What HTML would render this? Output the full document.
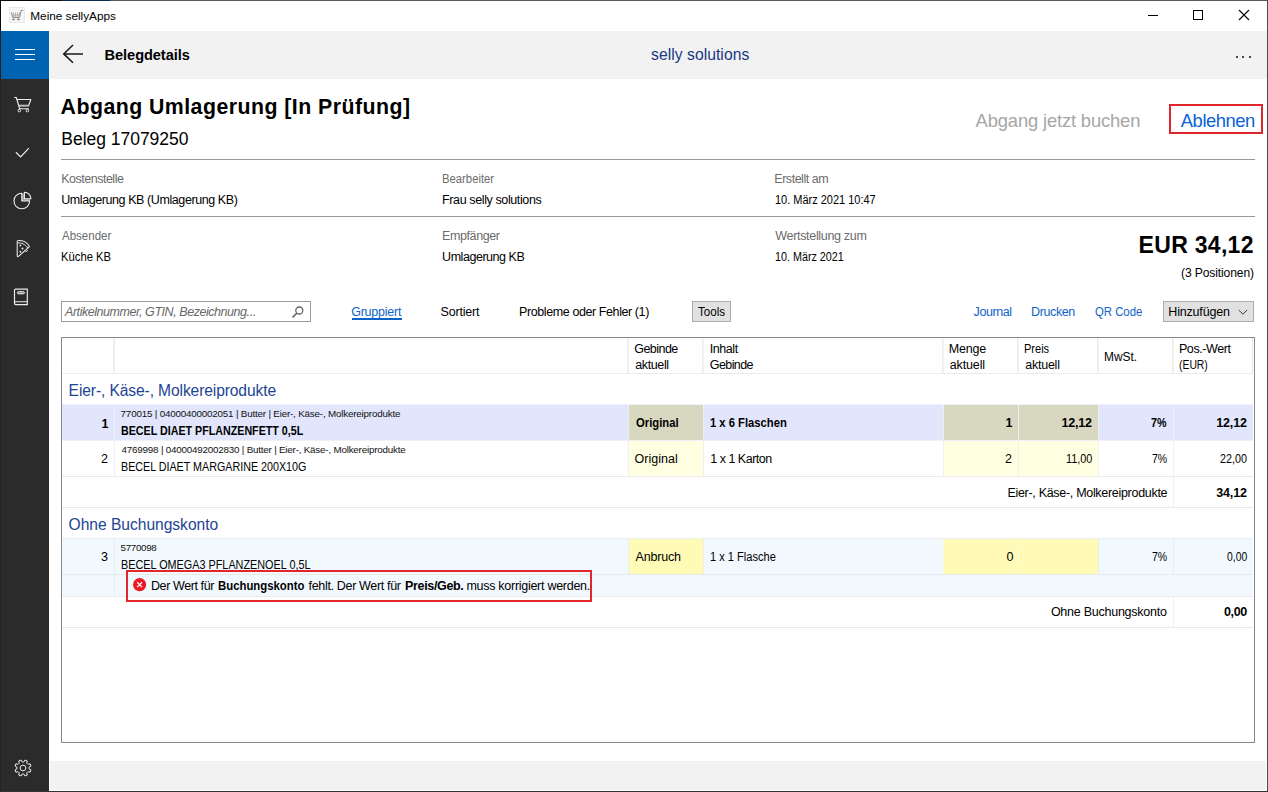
<!DOCTYPE html>
<html lang="de"><head><meta charset="utf-8"><title>Meine sellyApps</title>
<style>
html,body{margin:0;padding:0;width:1268px;height:792px;overflow:hidden;background:#fff;}
body{position:relative;font-family:"Liberation Sans",sans-serif;}
div,svg,span{position:absolute;}
span{line-height:20px;white-space:pre;transform-origin:0 50%;}
</style></head><body>
<div style="left:0px;top:0px;width:1268px;height:792px;background:#ffffff;"></div>
<div style="left:49px;top:31px;width:1218px;height:48px;background:#f2f2f2;"></div>
<div style="left:1px;top:31px;width:48px;height:760px;background:#2b2b2b;"></div>
<div style="left:1px;top:31px;width:48px;height:48px;background:#0063b1;"></div>
<div style="left:50px;top:761px;width:1216px;height:29px;background:#f2f2f2;"></div>
<div style="left:0px;top:0px;width:61px;height:1px;background:#0a0a0a;"></div>
<div style="left:61px;top:0px;width:49px;height:1px;background:#0b2b52;"></div>
<div style="left:110px;top:0px;width:1158px;height:1px;background:#5a5a5a;"></div>
<div style="left:0px;top:1px;width:1px;height:30px;background:#0c0c0c;"></div>
<div style="left:0px;top:31px;width:1px;height:48px;background:#2a1f16;"></div>
<div style="left:0px;top:79px;width:1px;height:713px;background:#232323;"></div>
<div style="left:1267px;top:0px;width:1px;height:792px;background:#4a4a4a;"></div>
<div style="left:0px;top:791px;width:1268px;height:1px;background:#333333;"></div>
<svg style="left:9px;top:7px" width="16" height="16" viewBox="0 0 16 16"><rect x="0.5" y="0.5" width="15" height="15" fill="#f6f6f6" stroke="#e9e9e9"/><path d="M2.3 5.2l1.5 5.4h6.8l1.5-7.2h2.2" fill="none" stroke="#8c8c8c" stroke-width="1"/><path d="M4.3 5.4l.6 4.6M6.4 5.4l.2 4.6M8.5 5.4l-.2 4.6M10.6 5.4l-.6 4.6M3.2 8h7.6" fill="none" stroke="#a8a8a8" stroke-width="0.9"/><path d="M3.2 12.6h2.6M8.2 12.6h2.6" stroke="#8c8c8c" stroke-width="1.2"/><path d="M4.5 10.6v2M9.5 10.6v2" stroke="#9a9a9a" stroke-width="0.9"/></svg>
<div style="left:1148px;top:15px;width:10px;height:1px;background:#000;"></div>
<div style="left:1193px;top:10px;width:10px;height:10px;border:1px solid #000;box-sizing:border-box;"></div>
<svg style="left:1238px;top:9px" width="12" height="12" viewBox="0 0 12 12"><path d="M1 1l10 10M11 1L1 11" stroke="#000" stroke-width="1.1" fill="none"/></svg>
<div style="left:15px;top:49px;width:20px;height:1.4px;background:#ffffff;"></div>
<div style="left:15px;top:54px;width:20px;height:1.4px;background:#ffffff;"></div>
<div style="left:15px;top:59px;width:20px;height:1.4px;background:#ffffff;"></div>
<svg style="left:61px;top:43px" width="24" height="22" viewBox="0 0 24 22"><path d="M22 10.9H3M12 2L2.7 10.9l9.3 8.9" stroke="#1a1a1a" stroke-width="1.55" fill="none"/></svg>
<div style="left:1236px;top:55.5px;width:2px;height:2px;background:#111;border-radius:1px;"></div>
<div style="left:1242px;top:55.5px;width:2px;height:2px;background:#111;border-radius:1px;"></div>
<div style="left:1249px;top:55.5px;width:2px;height:2px;background:#111;border-radius:1px;"></div>
<svg style="left:12px;top:94px" width="22" height="22" viewBox="0 0 22 22"><path d="M2.1 3.5H4.3L7.6 14.7H16.8M5 5.5H18.8L16.6 11.9H7" fill="none" stroke="#ececec" stroke-width="1.15" stroke-linejoin="round"/><path d="M6.9 11.2H16.8" stroke="#bbbbbb" stroke-width="1" fill="none"/><circle cx="7.3" cy="16.6" r="1.3" fill="none" stroke="#ececec" stroke-width="1"/><circle cx="15.4" cy="16.6" r="1.3" fill="none" stroke="#ececec" stroke-width="1"/></svg>
<svg style="left:12px;top:141px" width="22" height="22" viewBox="0 0 22 22"><path d="M3.9 11.3L8.6 15.9L16.9 7.1" fill="none" stroke="#ececec" stroke-width="1.2"/></svg>
<svg style="left:11px;top:188px" width="24" height="24" viewBox="0 0 24 24"><path d="M10.8 5.6H13.4V10.7H19V13H10.8Z" fill="#9c9c9c"/><path d="M10.8 5.2A7.8 7.8 0 1 0 18.6 13H10.8Z" fill="none" stroke="#ececec" stroke-width="1.1"/><path d="M13.4 4.2A6.5 6.5 0 0 1 19.9 10.7H13.4Z" fill="none" stroke="#ececec" stroke-width="1.1"/></svg>
<svg style="left:11px;top:236px" width="24" height="24" viewBox="0 0 24 24"><path d="M6.2 5.4C6.4 3.4 15 4.2 18.4 10.6L7.5 20.4C6.8 21 6.2 20.7 6.2 19.8Z" fill="none" stroke="#ececec" stroke-width="1.05" stroke-linejoin="round"/><path d="M6.4 7C10 6.4 14.4 8.2 16.8 12.2" fill="none" stroke="#ececec" stroke-width="1"/><path d="M14.2 15c.5 1.1 2.1.7 2.3-.8" fill="none" stroke="#ececec" stroke-width="1"/><circle cx="9.4" cy="9.4" r="0.95" fill="#ececec"/><circle cx="11.5" cy="12.5" r="0.95" fill="#ececec"/><circle cx="9.4" cy="15.7" r="0.95" fill="#ececec"/></svg>
<svg style="left:10.2px;top:284.6px" width="24" height="24" viewBox="0 0 24 24"><path d="M5.6 4.1H17.3V19.6H5.8C5 19.6 4.5 19 4.5 18.2V5.2C4.5 4.6 5 4.1 5.6 4.1Z" fill="none" stroke="#ececec" stroke-width="1.15"/><path d="M4.5 18.2C4.5 17.3 5 16.7 5.8 16.7H17.3" fill="none" stroke="#ececec" stroke-width="1.15"/><rect x="7.4" y="6.7" width="7" height="2.1" rx="0.9" fill="#8a8a8a" stroke="#ececec" stroke-width="1"/></svg>
<svg style="left:10.5px;top:756.2px" width="24" height="24" viewBox="0 0 24 24"><path d="M20.01 13.99L19.07 16.26L16.88 15.66L15.66 16.88L16.26 19.07L13.99 20.01L12.86 18.04L11.14 18.04L10.01 20.01L7.74 19.07L8.34 16.88L7.12 15.66L4.93 16.26L3.99 13.99L5.96 12.86L5.96 11.14L3.99 10.01L4.93 7.74L7.12 8.34L8.34 7.12L7.74 4.93L10.01 3.99L11.14 5.96L12.86 5.96L13.99 3.99L16.26 4.93L15.66 7.12L16.88 8.34L19.07 7.74L20.01 10.01L18.04 11.14L18.04 12.86Z" fill="none" stroke="#ededed" stroke-width="1" stroke-linejoin="round"/><circle cx="12" cy="12" r="2.9" fill="none" stroke="#ededed" stroke-width="1"/></svg>
<div style="left:61px;top:159px;width:1194px;height:1px;background:#999999;"></div>
<div style="left:61px;top:216px;width:1194px;height:1px;background:#999999;"></div>
<div style="left:1169px;top:104px;width:94px;height:30px;border:2px solid #e0262d;box-sizing:border-box;"></div>
<div style="left:61px;top:301px;width:250px;height:21px;background:#fff;border:1px solid #999ca2;box-sizing:border-box;"></div>
<svg style="left:290.7px;top:304.6px" width="14" height="14" viewBox="0 0 14 14"><circle cx="8.3" cy="5.5" r="3.5" fill="none" stroke="#666" stroke-width="1.3"/><path d="M5.9 8L1.6 12.4" stroke="#666" stroke-width="1.6" fill="none"/></svg>
<div style="left:351.5px;top:318px;width:50px;height:2px;background:#0e63c9;"></div>
<div style="left:692px;top:301px;width:39px;height:21px;background:#e1e1e1;border:1px solid #adadad;box-sizing:border-box;"></div>
<div style="left:1163px;top:301px;width:91px;height:21px;background:#e1e1e1;border:1px solid #adadad;box-sizing:border-box;"></div>
<svg style="left:1237px;top:307.8px" width="12" height="8" viewBox="0 0 12 8"><path d="M1.7 2l4.2 4.2L10.1 2" stroke="#333" stroke-width="1" fill="none"/></svg>
<div style="left:61px;top:337px;width:1194px;height:406px;background:#fff;border:1px solid #828790;box-sizing:border-box;"></div>
<div style="left:113px;top:338px;width:1px;height:35px;background:#efefef;"></div>
<div style="left:114px;top:338px;width:1px;height:35px;background:#efefef;"></div>
<div style="left:627px;top:338px;width:1px;height:35px;background:#ebebeb;"></div>
<div style="left:628px;top:338px;width:1px;height:35px;background:#f3f3f3;"></div>
<div style="left:702px;top:338px;width:1px;height:35px;background:#ebebeb;"></div>
<div style="left:703px;top:338px;width:1px;height:35px;background:#f3f3f3;"></div>
<div style="left:942px;top:338px;width:1px;height:35px;background:#ebebeb;"></div>
<div style="left:943px;top:338px;width:1px;height:35px;background:#f3f3f3;"></div>
<div style="left:1017px;top:338px;width:1px;height:35px;background:#ebebeb;"></div>
<div style="left:1018px;top:338px;width:1px;height:35px;background:#f3f3f3;"></div>
<div style="left:1097px;top:338px;width:1px;height:35px;background:#ebebeb;"></div>
<div style="left:1098px;top:338px;width:1px;height:35px;background:#f3f3f3;"></div>
<div style="left:1172px;top:338px;width:1px;height:35px;background:#ebebeb;"></div>
<div style="left:1173px;top:338px;width:1px;height:35px;background:#f3f3f3;"></div>
<div style="left:1252px;top:338px;width:1px;height:35px;background:#e8e8e8;"></div>
<div style="left:62px;top:373px;width:1191px;height:1px;background:#ececec;"></div>
<div style="left:62px;top:404px;width:1191px;height:1px;background:#eef1fd;"></div>
<div style="left:62px;top:440px;width:1191px;height:1px;background:#f0f1f6;"></div>
<div style="left:62px;top:405px;width:1191px;height:35px;background:#e1e6fc;"></div>
<div style="left:629px;top:405px;width:74px;height:35px;background:#d8d8c1;"></div>
<div style="left:944px;top:405px;width:74px;height:35px;background:#d8d8c1;"></div>
<div style="left:1019px;top:405px;width:79px;height:35px;background:#d8d8c1;"></div>
<div style="left:114px;top:405px;width:1px;height:35px;background:#eef0fb;"></div>
<div style="left:628px;top:405px;width:1px;height:35px;background:#f0f0ee;"></div>
<div style="left:703px;top:405px;width:1px;height:35px;background:#f0f0ee;"></div>
<div style="left:943px;top:405px;width:1px;height:35px;background:#f0f0ee;"></div>
<div style="left:1018px;top:405px;width:1px;height:35px;background:#f0f0ee;"></div>
<div style="left:1098px;top:405px;width:1px;height:35px;background:#f0f0ee;"></div>
<div style="left:1173px;top:405px;width:1px;height:35px;background:#eef0fb;"></div>
<div style="left:629px;top:441px;width:74px;height:35px;background:#ffffe1;"></div>
<div style="left:944px;top:441px;width:74px;height:35px;background:#ffffe1;"></div>
<div style="left:1019px;top:441px;width:79px;height:35px;background:#ffffe1;"></div>
<div style="left:114px;top:441px;width:1px;height:35px;background:#f0f0f0;"></div>
<div style="left:628px;top:441px;width:1px;height:35px;background:#f0f0f0;"></div>
<div style="left:703px;top:441px;width:1px;height:35px;background:#f0f0f0;"></div>
<div style="left:943px;top:441px;width:1px;height:35px;background:#f0f0f0;"></div>
<div style="left:1018px;top:441px;width:1px;height:35px;background:#f0f0f0;"></div>
<div style="left:1098px;top:441px;width:1px;height:35px;background:#f0f0f0;"></div>
<div style="left:1173px;top:441px;width:1px;height:35px;background:#f0f0f0;"></div>
<div style="left:62px;top:476px;width:1191px;height:1px;background:#e9e9e9;"></div>
<div style="left:1173px;top:477px;width:1px;height:30px;background:#f0f0f0;"></div>
<div style="left:62px;top:507px;width:1191px;height:1px;background:#e9e9e9;"></div>
<div style="left:62px;top:538px;width:1191px;height:1px;background:#ebeff2;"></div>
<div style="left:62px;top:539px;width:1191px;height:35px;background:#f2f9fe;"></div>
<div style="left:629px;top:539px;width:74px;height:35px;background:#fffbb7;"></div>
<div style="left:944px;top:539px;width:74px;height:35px;background:#fffbb7;"></div>
<div style="left:1019px;top:539px;width:79px;height:35px;background:#fffbb7;"></div>
<div style="left:114px;top:539px;width:1px;height:35px;background:#e9eef2;"></div>
<div style="left:628px;top:539px;width:1px;height:35px;background:#e9eef2;"></div>
<div style="left:703px;top:539px;width:1px;height:35px;background:#e9eef2;"></div>
<div style="left:943px;top:539px;width:1px;height:35px;background:#fdfbd5;"></div>
<div style="left:1018px;top:539px;width:1px;height:35px;background:#fdfbd5;"></div>
<div style="left:1098px;top:539px;width:1px;height:35px;background:#e9eef2;"></div>
<div style="left:1173px;top:539px;width:1px;height:35px;background:#e9eef2;"></div>
<div style="left:62px;top:574px;width:1191px;height:1px;background:#e4eaee;"></div>
<div style="left:62px;top:575px;width:1191px;height:21px;background:#f2f9fe;"></div>
<div style="left:114px;top:575px;width:1px;height:21px;background:#e9eef2;"></div>
<div style="left:62px;top:596px;width:1191px;height:1px;background:#e9ecef;"></div>
<div style="left:1173px;top:597px;width:1px;height:30px;background:#f0f0f0;"></div>
<div style="left:62px;top:627px;width:1191px;height:1px;background:#e9e9e9;"></div>
<div style="left:126px;top:570px;width:466px;height:32px;border:2px solid #e2262e;box-sizing:border-box;"></div>
<svg style="left:132px;top:577px" width="15" height="15" viewBox="0 0 15 15"><circle cx="7.6" cy="7.7" r="6.6" fill="#eb1a24"/><path d="M5.2 5.3l4.8 4.8M10 5.3l-4.8 4.8" stroke="#fff" stroke-width="1.25" fill="none"/></svg>
<span style="left:30.30px;top:6.00px;font-size:11.8px;color:#000;letter-spacing:-0.021px;">Meine sellyApps</span>
<span style="left:104.60px;top:45.00px;font-size:14.6px;color:#000;font-weight:700;letter-spacing:-0.073px;">Belegdetails</span>
<span style="left:651.10px;top:45.00px;font-size:15.7px;color:#1a3784;letter-spacing:0.036px;">selly solutions</span>
<span style="left:60.60px;top:97.00px;font-size:21.3px;color:#000;font-weight:700;letter-spacing:0.462px;">Abgang Umlagerung [In Prüfung]</span>
<span style="left:61.30px;top:129.00px;font-size:17.5px;color:#000;letter-spacing:-0.023px;">Beleg 17079250</span>
<span style="left:975.60px;top:111.00px;font-size:18.4px;color:#a6a6a6;letter-spacing:-0.161px;">Abgang jetzt buchen</span>
<span style="left:1180.80px;top:111.00px;font-size:18.4px;color:#0a63d6;letter-spacing:-0.457px;">Ablehnen</span>
<span style="left:61.20px;top:169.00px;font-size:12.5px;color:#6c6c6c;letter-spacing:-0.491px;">Kostenstelle</span>
<span style="left:61.20px;top:190.00px;font-size:12.5px;color:#000;letter-spacing:-0.414px;">Umlagerung KB (Umlagerung KB)</span>
<span style="left:62.00px;top:226.00px;font-size:12.5px;color:#6c6c6c;transform:scaleX(0.9208);">Absender</span>
<span style="left:61.30px;top:247.00px;font-size:12.5px;color:#000;transform:scaleX(0.9000);">Küche KB</span>
<span style="left:442.20px;top:169.00px;font-size:12.5px;color:#6c6c6c;transform:scaleX(0.9035);">Bearbeiter</span>
<span style="left:442.10px;top:190.00px;font-size:12.5px;color:#000;letter-spacing:-0.389px;">Frau selly solutions</span>
<span style="left:442.10px;top:226.00px;font-size:12.5px;color:#6c6c6c;letter-spacing:-0.412px;">Empfänger</span>
<span style="left:442.10px;top:247.00px;font-size:12.5px;color:#000;letter-spacing:-0.458px;">Umlagerung KB</span>
<span style="left:774.30px;top:169.00px;font-size:12.5px;color:#6c6c6c;letter-spacing:-0.470px;">Erstellt am</span>
<span style="left:775.12px;top:190.00px;font-size:12.5px;color:#000;transform:scaleX(0.8779);">10. März 2021 10:47</span>
<span style="left:775.30px;top:226.00px;font-size:12.5px;color:#6c6c6c;letter-spacing:-0.320px;">Wertstellung zum</span>
<span style="left:775.14px;top:247.00px;font-size:12.5px;color:#000;transform:scaleX(0.8608);">10. März 2021</span>
<span style="left:1138.60px;top:235.00px;font-size:23px;color:#000;font-weight:700;letter-spacing:0.300px;">EUR 34,12</span>
<span style="left:1181.10px;top:263.00px;font-size:12.1px;color:#000;letter-spacing:-0.131px;">(3 Positionen)</span>
<span style="left:65.00px;top:302.00px;font-size:12.5px;color:#686868;font-style:italic;letter-spacing:-0.447px;">Artikelnummer, GTIN, Bezeichnung...</span>
<span style="left:351.20px;top:302.00px;font-size:12.5px;color:#0e63c9;letter-spacing:-0.238px;">Gruppiert</span>
<span style="left:440.60px;top:302.00px;font-size:12.5px;color:#000;letter-spacing:-0.214px;">Sortiert</span>
<span style="left:519.10px;top:302.00px;font-size:12.5px;color:#000;letter-spacing:-0.409px;">Probleme oder Fehler (1)</span>
<span style="left:698.30px;top:302.00px;font-size:12.5px;color:#000;transform:scaleX(0.9276);">Tools</span>
<span style="left:973.60px;top:302.00px;font-size:12.5px;color:#0e63c9;letter-spacing:-0.433px;">Journal</span>
<span style="left:1031.10px;top:302.00px;font-size:12.5px;color:#0e63c9;letter-spacing:-0.400px;">Drucken</span>
<span style="left:1095.19px;top:302.00px;font-size:12.5px;color:#0e63c9;transform:scaleX(0.9078);">QR Code</span>
<span style="left:1168.30px;top:302.00px;font-size:12.5px;color:#000;letter-spacing:-0.178px;">Hinzufügen</span>
<span style="left:634.20px;top:339.00px;font-size:12.5px;color:#000;letter-spacing:-0.533px;">Gebinde</span>
<span style="left:635.20px;top:355.00px;font-size:12.5px;color:#000;letter-spacing:-0.367px;">aktuell</span>
<span style="left:709.80px;top:339.00px;font-size:12.5px;color:#000;letter-spacing:-0.440px;">Inhalt</span>
<span style="left:709.80px;top:355.00px;font-size:12.5px;color:#000;letter-spacing:-0.583px;">Gebinde</span>
<span style="left:948.80px;top:339.00px;font-size:12.5px;color:#000;letter-spacing:-0.200px;">Menge</span>
<span style="left:949.80px;top:355.00px;font-size:12.5px;color:#000;letter-spacing:-0.150px;">aktuell</span>
<span style="left:1024.32px;top:339.00px;font-size:12.5px;color:#000;transform:scaleX(0.8815);">Preis</span>
<span style="left:1025.20px;top:355.00px;font-size:12.5px;color:#000;letter-spacing:-0.233px;">aktuell</span>
<span style="left:1104.25px;top:347.00px;font-size:12.5px;color:#000;transform:scaleX(0.9515);">MwSt.</span>
<span style="left:1178.90px;top:339.00px;font-size:12.5px;color:#000;letter-spacing:-0.400px;">Pos.-Wert</span>
<span style="left:1179.07px;top:355.00px;font-size:12.5px;color:#000;transform:scaleX(0.8303);">(EUR)</span>
<span style="left:68.60px;top:381.00px;font-size:15.6px;color:#1e4494;letter-spacing:-0.107px;">Eier-, Käse-, Molkereiprodukte</span>
<span style="left:101.60px;top:414.00px;font-size:12.5px;color:#000;font-weight:700;">1</span>
<span style="left:120.60px;top:404.00px;font-size:9.8px;color:#111;letter-spacing:-0.181px;">770015 | 04000400002051 | Butter | Eier-, Käse-, Molkereiprodukte</span>
<span style="left:120.75px;top:421.00px;font-size:12.6px;color:#000;font-weight:700;transform:scaleX(0.8491);">BECEL DIAET PFLANZENFETT 0,5L</span>
<span style="left:635.60px;top:413.00px;font-size:12.5px;color:#000;font-weight:700;transform:scaleX(0.9021);">Original</span>
<span style="left:710.40px;top:413.00px;font-size:12.5px;color:#000;font-weight:700;transform:scaleX(0.8988);">1 x 6 Flaschen</span>
<span style="left:1005.60px;top:413.00px;font-size:12.5px;color:#000;font-weight:700;">1</span>
<span style="left:1061.60px;top:413.00px;font-size:12.5px;color:#000;font-weight:700;letter-spacing:-0.200px;">12,12</span>
<span style="left:1151.30px;top:413.00px;font-size:12.5px;color:#000;font-weight:700;transform:scaleX(0.8556);">7%</span>
<span style="left:1216.20px;top:413.00px;font-size:12.5px;color:#000;font-weight:700;letter-spacing:-0.125px;">12,12</span>
<span style="left:101.10px;top:449.00px;font-size:12.5px;color:#000;">2</span>
<span style="left:121.60px;top:440.00px;font-size:9.8px;color:#111;letter-spacing:-0.197px;">4769998 | 04000492002830 | Butter | Eier-, Käse-, Molkereiprodukte</span>
<span style="left:120.75px;top:457.00px;font-size:12.6px;color:#000;transform:scaleX(0.8514);">BECEL DIAET MARGARINE 200X10G</span>
<span style="left:634.60px;top:449.00px;font-size:12.5px;color:#000;letter-spacing:0.014px;">Original</span>
<span style="left:710.30px;top:449.00px;font-size:12.5px;color:#000;letter-spacing:-0.500px;">1 x 1 Karton</span>
<span style="left:1005.10px;top:449.00px;font-size:12.5px;color:#000;">2</span>
<span style="left:1065.73px;top:449.00px;font-size:12.5px;color:#000;transform:scaleX(0.8690);">11,00</span>
<span style="left:1151.56px;top:449.00px;font-size:12.5px;color:#000;transform:scaleX(0.8412);">7%</span>
<span style="left:1220.34px;top:449.00px;font-size:12.5px;color:#000;transform:scaleX(0.8600);">22,00</span>
<span style="left:1007.40px;top:483.00px;font-size:12.5px;color:#000;letter-spacing:-0.300px;">Eier-, Käse-, Molkereiprodukte</span>
<span style="left:1216.20px;top:483.00px;font-size:12.5px;color:#000;font-weight:700;letter-spacing:-0.125px;">34,12</span>
<span style="left:68.60px;top:515.00px;font-size:15.6px;color:#1e4494;letter-spacing:-0.024px;">Ohne Buchungskonto</span>
<span style="left:101.10px;top:547.00px;font-size:12.5px;color:#000;">3</span>
<span style="left:120.60px;top:538.00px;font-size:9.8px;color:#111;letter-spacing:-0.333px;">5770098</span>
<span style="left:120.74px;top:555.00px;font-size:12.6px;color:#000;transform:scaleX(0.8603);">BECEL OMEGA3 PFLANZENOEL 0,5L</span>
<span style="left:635.50px;top:547.00px;font-size:12.5px;color:#000;letter-spacing:-0.183px;">Anbruch</span>
<span style="left:710.41px;top:547.00px;font-size:12.5px;color:#000;transform:scaleX(0.8863);">1 x 1 Flasche</span>
<span style="left:1006.60px;top:547.00px;font-size:12.5px;color:#000;">0</span>
<span style="left:1151.56px;top:547.00px;font-size:12.5px;color:#000;transform:scaleX(0.8412);">7%</span>
<span style="left:1227.10px;top:547.00px;font-size:12.5px;color:#000;transform:scaleX(0.8292);">0,00</span>
<span style="left:151.00px;top:576.00px;font-size:12.5px;color:#000;letter-spacing:-0.409px;">Der Wert für</span>
<span style="left:218.09px;top:576.00px;font-size:12.5px;color:#000;font-weight:700;transform:scaleX(0.9085);">Buchungskonto</span>
<span style="left:308.60px;top:576.00px;font-size:12.5px;color:#000;letter-spacing:-0.333px;">fehlt. Der Wert für</span>
<span style="left:405.10px;top:576.00px;font-size:12.5px;color:#000;font-weight:700;letter-spacing:-0.356px;">Preis/Geb.</span>
<span style="left:466.40px;top:576.00px;font-size:12.5px;color:#000;letter-spacing:-0.277px;">muss korrigiert werden.</span>
<span style="left:1050.90px;top:602.00px;font-size:12.5px;color:#000;letter-spacing:-0.247px;">Ohne Buchungskonto</span>
<span style="left:1223.90px;top:602.00px;font-size:12.5px;color:#000;font-weight:700;letter-spacing:-0.300px;">0,00</span>
</body></html>
